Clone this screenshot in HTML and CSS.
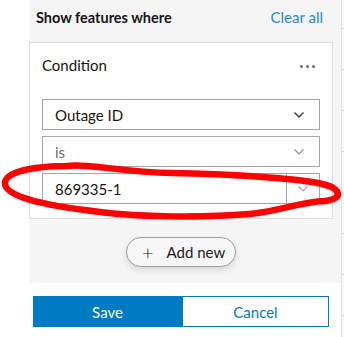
FILE: index.html
```html
<!DOCTYPE html>
<html>
<head>
<meta charset="utf-8">
<link rel="stylesheet" href="styles.css">
</head>
<body>
<div class="page">
  <div class="gutter"></div>
  <div class="panel">
    <div class="shaded">
      <div class="header">
        <span class="title">Show features where</span>
        <span class="clear">Clear all</span>
      </div>
      <div class="card">
        <div class="card-head">
          <span class="cond">Condition</span>
          <span class="dots"><i></i><i></i><i></i></span>
        </div>
        <div class="fields">
          <div class="select">
            <span class="val">Outage ID</span>
            <svg class="chev dark" width="12" height="8" viewBox="0 0 12 8"><path d="M1.5 1.5 L6 6 L10.5 1.5" fill="none" stroke="#3a3a3a" stroke-width="1.4"/></svg>
          </div>
          <div class="select">
            <span class="val muted">is</span>
            <svg class="chev" width="12" height="8" viewBox="0 0 12 8"><path d="M1.5 1.5 L6 6 L10.5 1.5" fill="none" stroke="#8a8a8a" stroke-width="1.2"/></svg>
          </div>
          <div class="combo">
            <span class="val">869335-1</span>
            <span class="combo-btn"><svg width="12" height="8" viewBox="0 0 12 8"><path d="M1.5 1.5 L6 6 L10.5 1.5" fill="none" stroke="#a8a8a8" stroke-width="1.2"/></svg></span>
          </div>
        </div>
      </div>
      <div class="add-row">
        <button class="add"><span class="plus">+</span><span>Add new</span></button>
      </div>
    </div>
    <div class="actions">
      <button class="save">Save</button>
      <button class="cancel">Cancel</button>
    </div>
  </div>
  <div class="strip"><i></i><i></i><i></i><i></i><i></i><i></i><i></i><i></i></div>
</div>
<svg class="annot" width="344" height="337" viewBox="0 0 344 337">
  <path d="M67 166 C40 166 8 170 5 182 C3 196 40 205 100 212 C140 217 200 218 250 214 C280 211 300 202 325 201 C345 199 341 187 318 183 C290 178 230 174 172 173 C120 172 88 163 67 166 Z" fill="none" stroke="#ff0000" stroke-width="6.5" stroke-linejoin="round"/>
</svg>
</body>
</html>
```

FILE: styles.css
```css
html, body {
  margin: 0;
  padding: 0;
  background: #ffffff;
}
body {
  font-family: "Lato", "Open Sans", sans-serif;
  color: #151515;
  width: 344px;
  height: 337px;
  overflow: hidden;
  position: relative;
}
.page {
  display: flex;
  height: 337px;
}
.gutter {
  width: 29px;
  flex: none;
}
.panel {
  width: 312px;
  flex: none;
  display: flex;
  flex-direction: column;
}
.shaded {
  background: #f5f5f5;
  height: 283px;
  display: flex;
  flex-direction: column;
}
.header {
  height: 42px;
  display: flex;
  align-items: center;
  justify-content: space-between;
  padding: 0 18px 0 7px;
  box-sizing: border-box;
}
.title {
  font-size: 14.5px;
  font-weight: 700;
  color: #151515;
  margin-top: -8px;
}
.clear {
  font-size: 15px;
  color: #2b8ad0;
  margin-top: -8px;
}
.card {
  margin-right: 8px;
  background: #ffffff;
  border: 1px solid #dcdcdc;
  height: 177px;
  box-sizing: border-box;
  padding: 0 12px;
}
.card-head {
  height: 56px;
  display: flex;
  justify-content: space-between;
  align-items: flex-start;
  padding-top: 12px;
  box-sizing: border-box;
}
.cond {
  font-size: 15px;
  line-height: 20px;
}
.dots {
  display: flex;
  gap: 3px;
  margin-top: 10px;
  margin-right: 5px;
}
.dots i {
  width: 3px;
  height: 3px;
  border-radius: 50%;
  background: #6b6b6b;
}
.fields {
  display: flex;
  flex-direction: column;
  gap: 6px;
}
.select, .combo {
  height: 31px;
  border: 1px solid #a6a6a6;
  box-sizing: border-box;
  display: flex;
  align-items: center;
  justify-content: space-between;
  background: #fff;
}
.select {
  padding: 0 14px 0 12px;
}
.combo {
  padding-left: 12px;
}
.val {
  font-size: 15px;
  color: #151515;
}
.val.muted {
  color: #6e6e6e;
}
.combo-btn {
  width: 32px;
  height: 29px;
  border-left: 1px solid #a6a6a6;
  display: flex;
  align-items: center;
  justify-content: center;
}
.add-row {
  display: flex;
  padding-right: 8px;
  justify-content: center;
  padding-top: 18px;
}
.add {
  width: 110px;
  height: 30px;
  border: 1px solid #9e9e9e;
  border-radius: 15px;
  background: #f7f7f7;
  box-shadow: 0 3px 6px rgba(0,0,0,0.12);
  font-family: inherit;
  font-size: 15px;
  color: #202020;
  display: flex;
  align-items: center;
  padding: 0 0 0 15px;
  gap: 13px;
}
.plus {
  font-size: 20px;
  font-weight: 300;
  line-height: 20px;
}
.actions {
  display: flex;
  margin: 13px 12px 0 4px;
  height: 31px;
}
.actions button {
  flex: none;
  height: 31px;
  font-family: inherit;
  font-size: 15px;
  box-sizing: border-box;
}
.save {
  width: 149px;
  background: #007ac2;
  color: #ffffff;
  border: none;
}
.cancel {
  width: 147px;
  background: #ffffff;
  color: #007ac2;
  border: 1px solid #007ac2;
}
.strip {
  flex: 1;
  background: #f7f7f7;
  border-left: 1px solid #e4e4e4;
  display: flex;
  flex-direction: column;
  padding-top: 28px;
  gap: 40px;
}
.strip i {
  display: block;
  height: 1px;
  background: #d8d8d8;
}
.annot {
  position: absolute;
  left: 0;
  top: 0;
  pointer-events: none;
}
```
